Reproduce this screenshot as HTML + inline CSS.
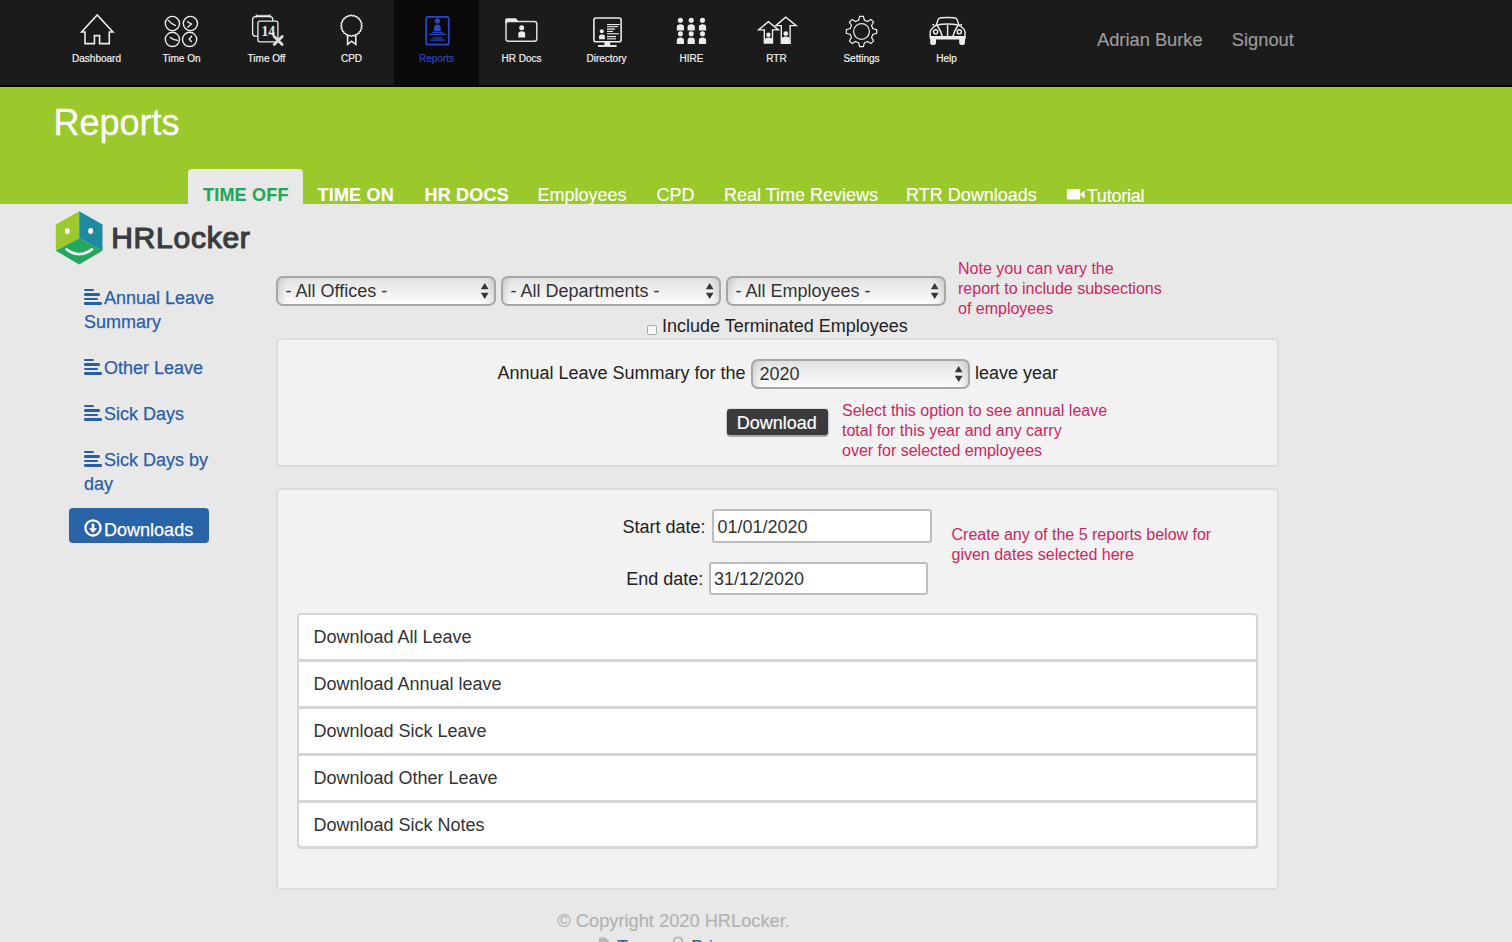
<!DOCTYPE html>
<html>
<head>
<meta charset="utf-8">
<style>
*{box-sizing:border-box;margin:0;padding:0}
html,body{width:1512px;height:942px;overflow:hidden}
body{background:#e8e8e8;font-family:"Liberation Sans",sans-serif;color:#222;position:relative}
.abs{position:absolute;white-space:nowrap}
#nav{position:absolute;left:0;top:0;width:1512px;height:87px;background:#1b1b1b;border-bottom:2px solid #060606}
.lbl{position:absolute;top:53.3px;width:85px;text-align:center;font-size:10px;line-height:12px;color:#f0f0f0;-webkit-text-stroke:0.2px #f0f0f0;white-space:nowrap}
.lbl.act{color:#2b45c5;-webkit-text-stroke:0.2px #2b45c5}
.user{position:absolute;top:30.4px;font-size:18.3px;line-height:20px;color:#9a9a9a;white-space:nowrap;-webkit-text-stroke:0.2px #9a9a9a}
#green{position:absolute;left:0;top:87px;width:1512px;height:117px;background:#9bc92c}
#title{position:absolute;left:53.4px;top:103.3px;font-size:36px;line-height:40px;color:#fff;white-space:nowrap;-webkit-text-stroke:0.3px #fff}
.tab{position:absolute;white-space:nowrap;top:185px;font-size:18px;line-height:20px;color:#fff;-webkit-text-stroke:0.15px currentColor}
.tab.b{font-weight:bold;letter-spacing:0.2px}
#tabact{position:absolute;left:188px;top:169px;width:115px;height:35px;background:#e8e8e8;border-radius:4px 4px 0 0}
.side{position:absolute;left:84px;font-size:18px;line-height:24px;color:#2b5fa5;white-space:nowrap;-webkit-text-stroke:0.25px currentColor}
.lst{position:absolute;left:84px;width:18px;height:17px}
.lst i{position:absolute;left:0;height:2.7px;border-radius:1.2px;background:#2b5fa5}
.sel{position:absolute;height:29.5px;border:2px solid #a6a6a6;border-radius:7px;background:linear-gradient(#e2e2e2,#eeeeee 45%,#fbfbfb);box-shadow:inset 8px 0 7px -5px rgba(0,0,0,.12),inset -8px 0 7px -5px rgba(0,0,0,.12),inset 0 -1.5px 0 #fff;font-size:18px;line-height:20px;color:#333;white-space:nowrap}
.sel span{position:absolute;top:3.3px}
.sel svg{position:absolute;right:5px;top:4.9px}
.note{position:absolute;font-size:16px;line-height:20px;color:#ca2862;white-space:nowrap}
.panel{position:absolute;left:276px;width:1003px;background:#f2f2f2;border:2px solid #dcdcdc;border-radius:5px}
.txt{position:absolute;font-size:18px;line-height:20px;color:#222;white-space:nowrap}
.inp{position:absolute;height:33.4px;border:2px solid #bdbdbd;border-radius:3px;background:#fff}
.row{position:absolute;left:297px;width:961px;background:#fff}
.rt{position:absolute;left:313.4px;font-size:18px;line-height:20px;color:#333;white-space:nowrap}
</style>
</head>
<body>
<div id="nav"></div>
<svg class="abs" style="left:0;top:0" width="1512" height="85" viewBox="0 0 1512 85">
<rect x="394" y="0" width="85" height="85" fill="#0a0a0a"/>
<g fill="none" stroke="#ececec" stroke-width="1.6" stroke-linejoin="miter">
<path d="M85,43.6 V32 H81.6 L97.2,15 L112.9,32 H109.3 V43.6 H99.6 V35.6 H94.4 V43.6 Z"/>
</g>
<g fill="none" stroke="#ececec" stroke-width="1.4" stroke-linecap="round" stroke-linejoin="round">
<circle cx="172.4" cy="23.5" r="7.1"/><circle cx="190.4" cy="23.5" r="7.1"/>
<circle cx="172.4" cy="39.4" r="7.1"/><circle cx="189.6" cy="39.4" r="7.1"/>
<path d="M168.4,20.4 Q171,23.6 175.3,25.4"/><path d="M187.6,21.8 L191.6,24 L187.8,27"/>
<path d="M170.3,37.6 Q173,40 177.4,40.4"/><path d="M191.6,36.3 L189.2,39.3 L191.4,41.6"/>
</g>
<g fill="none" stroke="#ececec" stroke-width="1.3">
<rect x="252.6" y="16.6" width="20.2" height="19.6" rx="3"/>
<path d="M256.2,14.2 V17.5 M270,14.2 V17.5 M256.2,15.4 H270" stroke-width="0.9"/>
<rect x="257.9" y="21.1" width="20" height="20.7" rx="2" fill="#1b1b1b"/>
</g>
<text x="268.3" y="35.8" font-family="Liberation Serif" font-weight="bold" font-size="13.6" fill="#ececec" text-anchor="middle">14</text>
<path d="M274.2,36.6 L282.2,44.6 M282.2,36.6 L274.2,44.6" stroke="#dedede" stroke-width="2.8" stroke-linecap="round"/>
<g fill="none" stroke="#ececec" stroke-width="1.3">
<path d="M362.15,25.70 L362.06,25.98 L361.82,26.24 L361.53,26.49 L361.28,26.73 L361.17,26.97 L361.21,27.24 L361.39,27.53 L361.61,27.85 L361.77,28.17 L361.79,28.46 L361.63,28.70 L361.33,28.89 L360.98,29.06 L360.68,29.22 L360.51,29.43 L360.49,29.70 L360.58,30.03 L360.71,30.39 L360.78,30.74 L360.72,31.02 L360.51,31.22 L360.17,31.33 L359.79,31.40 L359.46,31.48 L359.24,31.64 L359.14,31.89 L359.15,32.23 L359.18,32.62 L359.16,32.97 L359.03,33.23 L358.77,33.36 L358.42,33.38 L358.03,33.35 L357.69,33.34 L357.44,33.44 L357.28,33.66 L357.20,33.99 L357.13,34.37 L357.02,34.71 L356.82,34.92 L356.54,34.98 L356.19,34.91 L355.83,34.78 L355.50,34.69 L355.23,34.71 L355.02,34.88 L354.86,35.18 L354.69,35.53 L354.50,35.83 L354.26,35.99 L353.97,35.97 L353.65,35.81 L353.33,35.59 L353.04,35.41 L352.77,35.37 L352.53,35.48 L352.29,35.73 L352.04,36.02 L351.78,36.26 L351.50,36.35 L351.22,36.26 L350.96,36.02 L350.71,35.73 L350.47,35.48 L350.23,35.37 L349.96,35.41 L349.67,35.59 L349.35,35.81 L349.03,35.97 L348.74,35.99 L348.50,35.83 L348.31,35.53 L348.14,35.18 L347.98,34.88 L347.77,34.71 L347.50,34.69 L347.17,34.78 L346.81,34.91 L346.46,34.98 L346.18,34.92 L345.98,34.71 L345.87,34.37 L345.80,33.99 L345.72,33.66 L345.56,33.44 L345.31,33.34 L344.97,33.35 L344.58,33.38 L344.23,33.36 L343.97,33.23 L343.84,32.97 L343.82,32.62 L343.85,32.23 L343.86,31.89 L343.76,31.64 L343.54,31.48 L343.21,31.40 L342.83,31.33 L342.49,31.22 L342.28,31.02 L342.22,30.74 L342.29,30.39 L342.42,30.03 L342.51,29.70 L342.49,29.43 L342.32,29.22 L342.02,29.06 L341.67,28.89 L341.37,28.70 L341.21,28.46 L341.23,28.17 L341.39,27.85 L341.61,27.53 L341.79,27.24 L341.83,26.97 L341.72,26.73 L341.47,26.49 L341.18,26.24 L340.94,25.98 L340.85,25.70 L340.94,25.42 L341.18,25.16 L341.47,24.91 L341.72,24.67 L341.83,24.43 L341.79,24.16 L341.61,23.87 L341.39,23.55 L341.23,23.23 L341.21,22.94 L341.37,22.70 L341.67,22.51 L342.02,22.34 L342.32,22.18 L342.49,21.97 L342.51,21.70 L342.42,21.37 L342.29,21.01 L342.22,20.66 L342.28,20.38 L342.49,20.18 L342.83,20.07 L343.21,20.00 L343.54,19.92 L343.76,19.76 L343.86,19.51 L343.85,19.17 L343.82,18.78 L343.84,18.43 L343.97,18.17 L344.23,18.04 L344.58,18.02 L344.97,18.05 L345.31,18.06 L345.56,17.96 L345.72,17.74 L345.80,17.41 L345.87,17.03 L345.98,16.69 L346.18,16.48 L346.46,16.42 L346.81,16.49 L347.17,16.62 L347.50,16.71 L347.77,16.69 L347.98,16.52 L348.14,16.22 L348.31,15.87 L348.50,15.57 L348.74,15.41 L349.03,15.43 L349.35,15.59 L349.67,15.81 L349.96,15.99 L350.23,16.03 L350.47,15.92 L350.71,15.67 L350.96,15.38 L351.22,15.14 L351.50,15.05 L351.78,15.14 L352.04,15.38 L352.29,15.67 L352.53,15.92 L352.77,16.03 L353.04,15.99 L353.33,15.81 L353.65,15.59 L353.97,15.43 L354.26,15.41 L354.50,15.57 L354.69,15.87 L354.86,16.22 L355.02,16.52 L355.23,16.69 L355.50,16.71 L355.83,16.62 L356.19,16.49 L356.54,16.42 L356.82,16.48 L357.02,16.69 L357.13,17.03 L357.20,17.41 L357.28,17.74 L357.44,17.96 L357.69,18.06 L358.03,18.05 L358.42,18.02 L358.77,18.04 L359.03,18.17 L359.16,18.43 L359.18,18.78 L359.15,19.17 L359.14,19.51 L359.24,19.76 L359.46,19.92 L359.79,20.00 L360.17,20.07 L360.51,20.18 L360.72,20.38 L360.78,20.66 L360.71,21.01 L360.58,21.37 L360.49,21.70 L360.51,21.97 L360.68,22.18 L360.98,22.34 L361.33,22.51 L361.63,22.70 L361.79,22.94 L361.77,23.23 L361.61,23.55 L361.39,23.87 L361.21,24.16 L361.17,24.43 L361.28,24.67 L361.53,24.91 L361.82,25.16 L362.06,25.42 L362.15,25.70Z"/>
<path d="M347.6,35.6 V44.4 L351.6,41.2 L355.8,44.4 V35.6" stroke-width="1.6"/>
</g>
<g fill="none" stroke="#2b45c5" stroke-width="1.8">
<rect x="426.2" y="16.9" width="22.6" height="27.8" rx="2"/>
</g>
<g fill="#2b45c5">
<circle cx="437.4" cy="20.9" r="2.7"/>
<path d="M434.1,31 V27.5 Q434.1,24.6 437.4,24.6 Q440.7,24.6 440.7,27.5 V31 Z"/>
<rect x="431.7" y="31.7" width="11.7" height="1.2"/>
<rect x="429.1" y="33.8" width="16.9" height="1.2"/>
<rect x="432.8" y="37.4" width="9.5" height="1.2"/>
<rect x="430.2" y="39.5" width="14.8" height="1.2"/>
</g>
<g fill="none" stroke="#dcdcdc" stroke-width="1.5">
<rect x="506" y="21.6" width="30.8" height="19.6" rx="2.5"/>
</g>
<g fill="#ececec">
<path d="M505.1,24 V20.3 Q505.1,18.2 507.2,18.2 H515.8 L518.6,21.4 H506.5 Z"/>
<circle cx="521.7" cy="27.8" r="2.5"/>
<path d="M518.3,37.4 V33.8 Q518.3,31.2 521.75,31.2 Q525.2,31.2 525.2,33.8 V37.4 Z"/>
</g>
<g fill="none" stroke="#ececec" stroke-width="1.6">
<rect x="593.9" y="18" width="27.2" height="23.8" rx="2"/>
</g>
<g fill="#ececec">
<rect x="604.4" y="42" width="5.8" height="3.4"/>
<rect x="598" y="45" width="18.6" height="1.9"/>
<circle cx="601.8" cy="31.2" r="2"/>
<path d="M599.1,39.2 V36.6 Q599.1,34.6 602,34.6 Q604.9,34.6 604.9,36.6 V39.2 Z"/>
<rect x="607" y="24" width="12.7" height="1.1"/>
<rect x="607" y="26.1" width="11" height="1.1"/>
<rect x="607" y="28.4" width="8" height="1.3"/>
<rect x="607" y="30.9" width="6" height="1.1"/>
<rect x="607" y="33.2" width="12" height="1.1"/>
<rect x="607" y="36" width="9" height="1.2"/>
<rect x="607" y="38.3" width="9" height="1.1"/>
</g>
<g fill="#ececec">
<circle cx="680.4" cy="20.3" r="2.55"/><path d="M676.8,30.4 V27.1 Q676.8,24.3 680.4,24.3 Q684.0,24.3 684.0,27.1 V30.4 Z"/><circle cx="680.4" cy="33.8" r="2.55"/><path d="M676.8,43.9 V40.4 Q676.8,37.6 680.4,37.6 Q684.0,37.6 684.0,40.4 V43.9 Z"/><circle cx="691.2" cy="20.3" r="2.55"/><path d="M687.6,30.4 V27.1 Q687.6,24.3 691.2,24.3 Q694.8000000000001,24.3 694.8000000000001,27.1 V30.4 Z"/><circle cx="691.2" cy="33.8" r="2.55"/><path d="M687.6,43.9 V40.4 Q687.6,37.6 691.2,37.6 Q694.8000000000001,37.6 694.8000000000001,40.4 V43.9 Z"/><circle cx="702.5" cy="20.3" r="2.55"/><path d="M698.9,30.4 V27.1 Q698.9,24.3 702.5,24.3 Q706.1,24.3 706.1,27.1 V30.4 Z"/><circle cx="702.5" cy="33.8" r="2.55"/><path d="M698.9,43.9 V40.4 Q698.9,37.6 702.5,37.6 Q706.1,37.6 706.1,40.4 V43.9 Z"/>
</g>
<g fill="none" stroke="#ececec" stroke-width="1.4" stroke-linejoin="miter">
<path d="M768.4,21.6 L758.6,29.9 H764.3 V43 H772.5 V29.9 H778.4 Z"/>
<path d="M785.8,17.1 L775.8,25.6 H781.3 V43.2 H790.1 V25.6 H796.2 Z" fill="#1b1b1b"/>
</g>
<g fill="#ececec">
<circle cx="768.4" cy="34.8" r="2.2"/>
<path d="M764.9,42.9 V39.8 Q764.9,37.6 768.5,37.6 Q772.2,37.6 772.2,39.8 V42.9 Z"/>
<circle cx="785.8" cy="33.6" r="2.4"/>
<path d="M781.8,43 V39.2 Q781.8,36.6 785.8,36.6 Q789.7,36.6 789.7,39.2 V43 Z"/>
</g>
<g fill="none" stroke="#ececec" stroke-width="1.2" stroke-linejoin="miter">
<path d="M858.60,20.27 L859.64,16.31 L863.36,16.31 L864.40,20.27 L865.44,20.59 L866.43,21.00 L867.39,21.51 L870.92,19.44 L873.56,22.08 L871.49,25.61 L872.00,26.57 L872.41,27.56 L872.73,28.60 L876.69,29.64 L876.69,33.36 L872.73,34.40 L872.41,35.44 L872.00,36.43 L871.49,37.39 L873.56,40.92 L870.92,43.56 L867.39,41.49 L866.43,42.00 L865.44,42.41 L864.40,42.73 L863.36,46.69 L859.64,46.69 L858.60,42.73 L857.56,42.41 L856.57,42.00 L855.61,41.49 L852.08,43.56 L849.44,40.92 L851.51,37.39 L851.00,36.43 L850.59,35.44 L850.27,34.40 L846.31,33.36 L846.31,29.64 L850.27,28.60 L850.59,27.56 L851.00,26.57 L851.51,25.61 L849.44,22.08 L852.08,19.44 L855.61,21.51 L856.57,21.00 L857.56,20.59Z"/>
<circle cx="861.5" cy="31.5" r="7.9" stroke-width="1.2"/>
</g>
<g fill="none" stroke="#ececec" stroke-width="1.4" stroke-linecap="round">
<path d="M936.4,25 L937.9,19.9 Q938.6,17.9 941.2,17.7 Q947.6,17.2 954,17.7 Q956.6,17.9 957.3,19.9 L958.8,25"/>
<path d="M936,25.2 Q947.6,22.9 959.2,25.2"/>
<path d="M936.4,25.4 Q931,28 930.2,32 V37"/>
<path d="M958.8,25.4 Q964.4,28 965,32 V37"/>
<path d="M937.6,26 Q941,31 942.2,36.2"/>
<path d="M957.6,26 Q954.2,31 953,36.2"/>
<path d="M947.6,25.6 V36.3"/>
<circle cx="935.6" cy="31.8" r="2.1"/>
<circle cx="959.3" cy="31.8" r="2.1"/>
</g>
<g fill="#ececec">
<path d="M929.8,36 H965.6 V38.5 Q965.6,39.6 964.6,39.6 H930.8 Q929.8,39.6 929.8,38.5 Z"/>
<path d="M930.2,38 H936 V42.5 Q936,45.1 933.1,45.1 Q930.2,45.1 930.2,42.5 Z"/>
<path d="M959.2,38 H965 V42.5 Q965,45.1 962.1,45.1 Q959.2,45.1 959.2,42.5 Z"/>
<circle cx="933.4" cy="24.7" r="1"/><circle cx="961.1" cy="24.7" r="1"/>
</g>
</svg>
<div class="lbl" style="left:54px">Dashboard</div>
<div class="lbl" style="left:139px">Time On</div>
<div class="lbl" style="left:224px">Time Off</div>
<div class="lbl" style="left:309px">CPD</div>
<div class="lbl act" style="left:394px">Reports</div>
<div class="lbl" style="left:479px">HR Docs</div>
<div class="lbl" style="left:564px">Directory</div>
<div class="lbl" style="left:649px">HIRE</div>
<div class="lbl" style="left:734px">RTR</div>
<div class="lbl" style="left:819px">Settings</div>
<div class="lbl" style="left:904px">Help</div>

<div class="user" style="left:1097px">Adrian Burke</div>
<div class="user" style="left:1231.8px">Signout</div>
<div id="green"></div>
<div id="title">Reports</div>
<div id="tabact"></div>
<div class="tab b" style="left:203px;color:#1fa75b">TIME OFF</div>
<div class="tab b" style="left:317.5px">TIME ON</div>
<div class="tab b" style="left:424.5px">HR DOCS</div>
<div class="tab" style="left:537.5px">Employees</div>
<div class="tab" style="left:656.5px">CPD</div>
<div class="tab" style="left:724px">Real Time Reviews</div>
<div class="tab" style="left:906px">RTR Downloads</div>
<svg class="abs" style="left:1066px;top:189px" width="20" height="11" viewBox="0 0 20 11"><rect x="0.8" y="0.3" width="13.4" height="10.2" rx="1" fill="#fff"/><path d="M14,5.4 L18.6,1.2 V9.6 Z" fill="#fff"/></svg>
<div class="tab" style="left:1086.8px;top:186px;letter-spacing:-0.25px">Tutorial</div>

<svg class="abs" style="left:50px;top:205px" width="60" height="65" viewBox="50 205 60 65">
<path d="M79.2,211.3 L55.8,224.4 L55.8,250.8 L79.2,238.3 Z" fill="#9dc92e"/>
<path d="M79.2,211.3 L102.5,224.4 L102.5,250.8 L79.2,238.3 Z" fill="#1e8aa1"/>
<path d="M79.2,238.3 L55.8,250.8 L79.2,264.4 L102.5,250.8 Z" fill="#24a95c"/>
<ellipse cx="67.4" cy="231" rx="2.5" ry="2.9" fill="#fff"/>
<ellipse cx="90.7" cy="231" rx="2.5" ry="2.9" fill="#fff"/>
<path d="M66.6,249.4 Q79.2,258.8 92,249.4" fill="none" stroke="#fff" stroke-width="2.6" stroke-linecap="round"/>
<circle cx="98.2" cy="234.4" r="0.7" fill="#24a95c"/>
</svg>
<div class="abs" style="left:111.2px;top:220.9px;font-size:30px;line-height:34px;font-weight:normal;letter-spacing:0.75px;-webkit-text-stroke:1.2px #3b3c3e;color:#3b3c3e">HRLocker</div>

<div class="lst" style="top:288.7px"><i style="top:0;width:10.3px"></i><i style="top:4.5px;width:16.4px"></i><i style="top:9px;width:13.5px"></i><i style="top:13.5px;width:17.8px"></i></div><div class="side" style="left:104px;top:285.8px">Annual Leave</div>
<div class="side" style="top:309.8px">Summary</div>
<div class="lst" style="top:358.7px"><i style="top:0;width:10.3px"></i><i style="top:4.5px;width:16.4px"></i><i style="top:9px;width:13.5px"></i><i style="top:13.5px;width:17.8px"></i></div><div class="side" style="left:104px;top:355.8px">Other Leave</div>
<div class="lst" style="top:404.7px"><i style="top:0;width:10.3px"></i><i style="top:4.5px;width:16.4px"></i><i style="top:9px;width:13.5px"></i><i style="top:13.5px;width:17.8px"></i></div><div class="side" style="left:104px;top:401.8px">Sick Days</div>
<div class="lst" style="top:450.7px"><i style="top:0;width:10.3px"></i><i style="top:4.5px;width:16.4px"></i><i style="top:9px;width:13.5px"></i><i style="top:13.5px;width:17.8px"></i></div><div class="side" style="left:104px;top:447.8px">Sick Days by</div>
<div class="side" style="top:471.8px">day</div>
<div class="abs" style="left:69px;top:508px;width:140px;height:35px;background:#2a64a8;border-radius:4px"></div>
<svg class="abs" style="left:83px;top:518px" width="20" height="20" viewBox="0 0 20 20"><circle cx="10" cy="9.9" r="7.6" fill="none" stroke="#fff" stroke-width="2.3"/><path d="M10,5.6 V11.6" stroke="#fff" stroke-width="2.6"/><path d="M5.9,10.3 L10,14.9 L14.1,10.3 Z" fill="#fff"/></svg>
<div class="side" style="left:104.1px;top:518.2px;color:#fff">Downloads</div>

<div class="sel" style="left:276px;top:276px;width:219.5px"><span style="left:7.5px">- All Offices -</span><svg width="9" height="17" viewBox="0 0 9 17"><path d="M4.7,0 L8.6,6.2 H0.8 Z M0.8,9.7 H8.6 L4.7,16 Z" fill="#383838"/></svg></div>
<div class="sel" style="left:501px;top:276px;width:219.5px"><span style="left:7.5px">- All Departments -</span><svg width="9" height="17" viewBox="0 0 9 17"><path d="M4.7,0 L8.6,6.2 H0.8 Z M0.8,9.7 H8.6 L4.7,16 Z" fill="#383838"/></svg></div>
<div class="sel" style="left:726px;top:276px;width:219.5px"><span style="left:7.5px">- All Employees -</span><svg width="9" height="17" viewBox="0 0 9 17"><path d="M4.7,0 L8.6,6.2 H0.8 Z M0.8,9.7 H8.6 L4.7,16 Z" fill="#383838"/></svg></div>
<div class="abs" style="left:647px;top:325px;width:10px;height:10px;border:1px solid #aaa;border-radius:2px;background:linear-gradient(#f4f4f4,#fff)"></div>
<div class="txt" style="left:662px;top:315.5px">Include Terminated Employees</div>
<div class="note" style="left:958px;top:259px">Note you can vary the<br>report to include subsections<br>of employees</div>

<div class="panel" style="top:338px;height:129px"></div>
<div class="txt" style="left:497.5px;top:363.4px">Annual Leave Summary for the</div>
<div class="sel" style="left:750.5px;top:359px;width:219px"><span style="left:7px;top:3.3px">2020</span><svg width="9" height="17" viewBox="0 0 9 17"><path d="M4.7,0 L8.6,6.2 H0.8 Z M0.8,9.7 H8.6 L4.7,16 Z" fill="#383838"/></svg></div>
<div class="txt" style="left:975px;top:363.4px">leave year</div>
<div class="abs" style="left:727px;top:409px;width:101px;height:25.5px;background:#3a3b3d;border-radius:3px;box-shadow:0 1.6px 0 0.4px #a9a9a9,0 0 0 1.2px #dedede"></div>
<div class="txt" style="left:736.8px;top:413.3px;color:#fff;-webkit-text-stroke:0.2px #fff">Download</div>
<div class="note" style="left:842px;top:400.5px">Select this option to see annual leave<br>total for this year and any carry<br>over for selected employees</div>

<div class="panel" style="top:488px;height:402px"></div>
<div class="txt" style="left:622.5px;top:516.5px">Start date:</div>
<div class="inp" style="left:712px;top:509.3px;width:219.5px"></div>
<div class="txt" style="left:717.5px;top:516.5px;color:#333">01/01/2020</div>
<div class="txt" style="left:626.3px;top:569px">End date:</div>
<div class="inp" style="left:708.5px;top:561.5px;width:219px"></div>
<div class="txt" style="left:714px;top:569px;color:#333">31/12/2020</div>
<div class="note" style="left:951.5px;top:525px">Create any of the 5 reports below for<br>given dates selected here</div>

<div class="abs" style="left:297px;top:613px;width:961px;height:235.5px;background:#d5d5d5;border-radius:4px"></div>
<div class="row" style="left:299px;top:615.3px;width:957px;height:43.8px;border-radius:3px 3px 0 0"></div>
<div class="row" style="left:299px;top:661.9px;width:957px;height:44.2px"></div>
<div class="row" style="left:299px;top:708.9px;width:957px;height:44.2px"></div>
<div class="row" style="left:299px;top:755.9px;width:957px;height:44.2px"></div>
<div class="row" style="left:299px;top:802.9px;width:957px;height:43.4px;border-radius:0 0 3px 3px"></div>
<div class="rt" style="top:626.9px">Download All Leave</div>
<div class="rt" style="top:673.8px">Download Annual leave</div>
<div class="rt" style="top:720.8px">Download Sick Leave</div>
<div class="rt" style="top:767.8px">Download Other Leave</div>
<div class="rt" style="top:814.8px">Download Sick Notes</div>

<div class="txt" style="left:557.3px;top:911.3px;color:#b3b3b3;font-size:18.25px;-webkit-text-stroke:0.2px #b3b3b3">© Copyright 2020 HRLocker.</div>
<svg class="abs" style="left:598px;top:936px" width="16" height="10" viewBox="0 0 16 10"><path d="M1,1.5 H7.5 L11,5 V10 H1 Z" fill="#b8b8b8"/></svg>
<div class="txt" style="left:617px;top:936.5px;color:#2a5fa8">Terms</div>
<svg class="abs" style="left:671px;top:936px" width="16" height="10" viewBox="0 0 16 10"><path d="M3,6 V4.5 Q3,1.5 7,1.5 Q11,1.5 11,4.5 V6" fill="none" stroke="#b8b8b8" stroke-width="2"/><rect x="1.5" y="6" width="11" height="5" fill="#b8b8b8"/></svg>
<div class="txt" style="left:691px;top:936.5px;color:#2a5fa8">Privacy</div>

</body>
</html>
